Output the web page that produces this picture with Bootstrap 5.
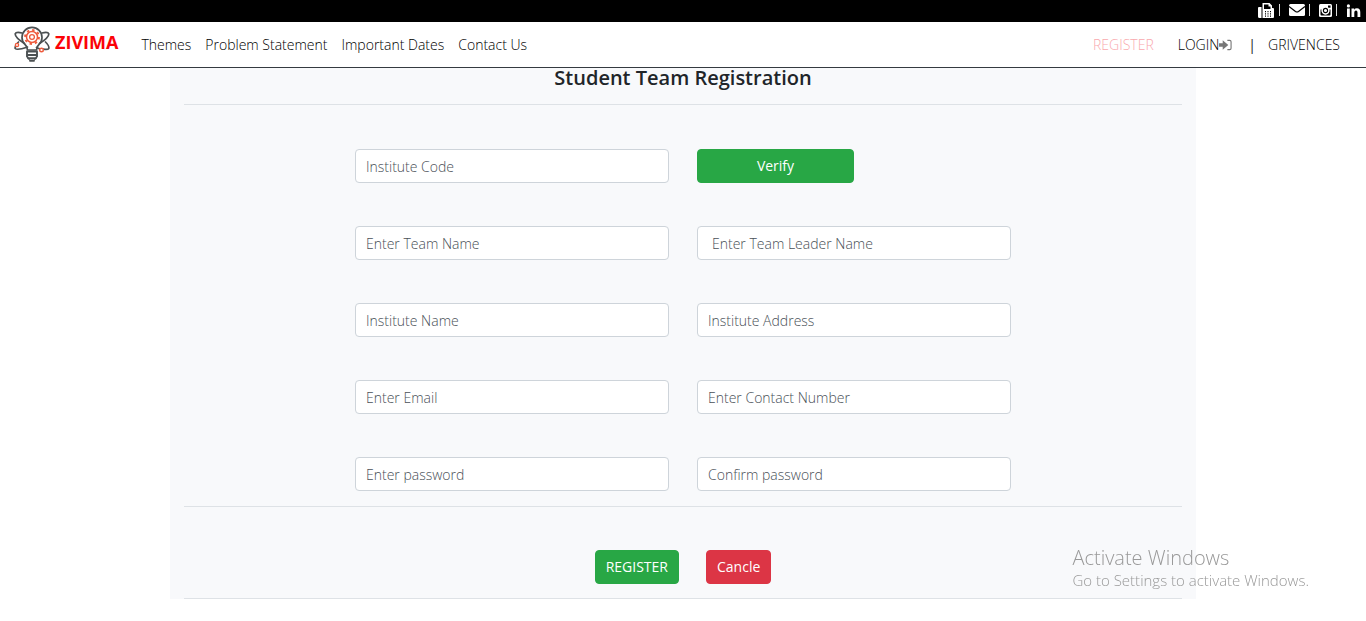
<!DOCTYPE html>
<html lang="en">
<head>
<meta charset="utf-8">
<meta name="viewport" content="width=device-width, initial-scale=1">
<title>Zivima - Student Team Registration</title>
<link href="https://cdn.jsdelivr.net/npm/bootstrap@5.3.0/dist/css/bootstrap.min.css" rel="stylesheet">
<style>
  body { font-family: "Open Sans", "Noto Sans", sans-serif; font-size: 14px; line-height: 20px; color: #212529; background: #fff; padding-top: 66px; }
  a { text-decoration: none; }
  .social-bar { background: #000; height: 22px; padding: 0 5px 2px 0; gap: 5px; }
  .social-bar a { color: #fff; display: flex; }
  .social-bar .divider { width: 1px; height: 12px; background: #ddd; }
  .social-bar .close-left { margin-left: -1px; }
  .main-nav { background: #fff; border-bottom: 1px solid #343a40; min-height: 46px; padding: 0 26px 0 14px; }
  .main-nav .nav-link { color: #000; padding: 0; font-size: 14px; font-weight: 300; line-height: 20px; }
  .main-nav .nav-link.current { color: #f9a9ae; }
  .brand { padding-bottom: 2px; }
  .site-name { color: #fb0207; font-weight: 700; font-size: 18px; line-height: 24px; margin-left: 5px; padding-bottom: 4px; }
  .site-links { gap: 14px; margin-left: 23px; }
  .login-icon { color: #777; }
  .panel { background: #f8f9fb; max-width: 1026px; padding: 0 14px; }
  .panel h1 { font-size: 20px; font-weight: 600; line-height: 24px; padding-bottom: 14px; }
  .panel hr { color: #dee2e6; opacity: 1; margin: 0; }
  .panel .row { --bs-gutter-x: 28px; }
  .fields { gap: 43px; padding: 44px 0 15px; }
  .panel .form-control, .panel .btn { font-size: 14px; line-height: 20px; height: 34px; padding: 6px 10px; border-radius: 4px; }
  .panel .form-control { border-color: #ced4da; }
  .panel .form-control::placeholder { color: #495057; font-weight: 300; }
  .panel .form-control.wide-start { padding-left: 14px; }
  .panel .btn { color: #fff; }
  .btn-go { background: #28a745; border-color: #28a745; }
  .btn-stop { background: #dc3545; border-color: #dc3545; }
  .actions { gap: 27px; padding: 43px 0 14px; }
  .watermark { right: 57px; bottom: 31px; color: #999; pointer-events: none; z-index: 1040; font-size: 15px; font-weight: 300; }
  .watermark .big-line { font-size: 20px; line-height: 24px; }
</style>
</head>
<body>
<header class="fixed-top">
  <div class="social-bar d-flex justify-content-end align-items-center">
    <a href="#" aria-label="Fax"><svg width="16" height="15" viewBox="0 0 16 15"><path fill="#fff" d="M1 4h2.500v11H1.500Q0 15 0 13.500V5Q0 4 1 4zM4.500 0h7l2.500 2.500v2.500h1q1 0 1 1v8q0 1-1 1H4.500z"/><path fill="#000" d="M6 1.500h4.500v2h2V6H6zM7 8h1v1.200H7zm2.500 0h1v1.200h-1zM12 8h1v1.200h-1zM7 10.300h1v1.200H7zm2.500 0h1v1.200h-1zm2.500 0h1v1.200h-1zM7 12.500h1v1.200H7zm2.500 0h1v1.200h-1zm2.500 0h1v1.200h-1z"/></svg></a>
    <span class="divider"></span>
    <a href="#" class="ms-1" aria-label="Email"><svg width="16" height="12" viewBox="0 0 16 12"><rect width="16" height="12" rx="1.500" fill="#fff"/><path d="M0 2.500l6.500 5q1.500 1 3 0l6.500-5" fill="none" stroke="#000" stroke-width="1.200"/></svg></a>
    <span class="divider close-left"></span>
    <a href="#" class="ms-1" aria-label="Instagram"><svg width="13" height="13" viewBox="0 0 13 13"><rect width="13" height="13" rx="1.500" fill="#fff"/><path d="M1.500 5.500v5q0 1 1 1h8q1 0 1-1v-5h-1.200A4 4 0 1 1 2.700 5.500zM9 1.500h2.500v2.300H9z" fill="#000"/><circle cx="6.500" cy="6.500" r="3.800" fill="#fff"/><circle cx="6.500" cy="6.500" r="2.100" fill="none" stroke="#000" stroke-width="1.100"/></svg></a>
    <span class="divider close-left"></span>
    <a href="#" class="ms-1" aria-label="LinkedIn"><svg width="15" height="13" viewBox="0 0 15 13"><path fill="#fff" d="M1 4.500h2.800V13H1zM5.500 4.500h2.700v1.200Q9 4.300 11 4.300q3.300 0 3.300 3.900V13h-2.800V8.600q0-2-1.500-2-1.700 0-1.700 2V13H5.500z"/><circle cx="2.400" cy="1.900" r="1.600" fill="#fff"/></svg></a>
  </div>
  <nav class="main-nav d-flex align-items-center">
    <a href="#" class="brand d-flex align-items-center">
      <svg width="36" height="37" viewBox="0 0 36 37" fill="none" stroke="#4b5052" stroke-width="1.700" stroke-linecap="round">
        <path d="M13.500 25q0-3.500-2.500-5.500a10 10 0 1 1 14 0q-2.500 2-2.500 5.500z"/>
        <path d="M8 8Q2 6.500 1.200 8.800 1 12.500 10.500 18.500M28 8q6-1.500 6.800 .8Q35 12.500 25.500 18.500M4.500 17q-4 4-3.300 6.500 2 2 12.300-1.500M31.500 17q4 4 3.300 6.500-1 1.500-5.500 .6M22.500 22.500l3.500 1.500"/>
        <path d="M13 26.500h10M13 30h10M14 33.200h8M16 35.700h4M13 26.500v5l2 2.500M23 26.500v5l-2 2.500" stroke-width="1.900"/>
        <g stroke="#ee5a3c"><circle cx="18" cy="12" r="5.500" stroke-width="1.500"/><circle cx="18" cy="12" r="7" stroke-width="1.800" stroke-dasharray="2.400 3.098" stroke-linecap="butt"/><circle cx="18" cy="12" r="2.400" stroke-width="1.300"/><circle cx="3" cy="20" r="1.600" fill="#fff" stroke-width="1.400"/><circle cx="27.500" cy="25" r="1.800" fill="#fff" stroke-width="1.400"/></g>
      </svg>
      <span class="site-name">ZIVIMA</span>
    </a>
    <div class="site-links d-flex flex-grow-1">
      <a class="nav-link" href="#">Themes</a>
      <a class="nav-link" href="#">Problem Statement</a>
      <a class="nav-link" href="#">Important Dates</a>
      <a class="nav-link" href="#">Contact Us</a>
    </div>
    <div class="d-flex align-items-center">
      <a class="nav-link current me-4" href="#">REGISTER</a>
      <a class="nav-link d-flex align-items-center" href="#">LOGIN<svg class="login-icon" width="13" height="12" viewBox="0 0 14 12"><path fill="currentColor" d="M0 4h4V1l6 5-6 5V8H0z"/><path d="M9 1h2.500q1.500 0 1.500 1.500v7q0 1.500-1.500 1.500H9" fill="none" stroke="currentColor" stroke-width="1.200"/></svg></a>
      <span class="ms-3 me-2 pe-1">|</span>
      <a class="nav-link" href="#">GRIVENCES</a>
    </div>
  </nav>
</header>

<main class="panel container">
  <h1 class="text-center m-0">Student Team Registration</h1>
  <form>
    <hr>
    <div class="fields d-flex flex-column">
      <div class="row">
        <div class="col-4 offset-2"><input class="form-control" type="text" placeholder="Institute Code" aria-label="Institute Code"></div>
        <div class="col-4"><button type="button" class="btn btn-go w-50">Verify</button></div>
      </div>
      <div class="row">
        <div class="col-4 offset-2"><input class="form-control" type="text" placeholder="Enter Team Name" aria-label="Team name"></div>
        <div class="col-4"><input class="form-control wide-start" type="text" placeholder="Enter Team Leader Name" aria-label="Team leader name"></div>
      </div>
      <div class="row">
        <div class="col-4 offset-2"><input class="form-control" type="text" placeholder="Institute Name" aria-label="Institute name"></div>
        <div class="col-4"><input class="form-control" type="text" placeholder="Institute Address" aria-label="Institute address"></div>
      </div>
      <div class="row">
        <div class="col-4 offset-2"><input class="form-control" type="email" placeholder="Enter Email" aria-label="Email"></div>
        <div class="col-4"><input class="form-control" type="tel" placeholder="Enter Contact Number" aria-label="Contact number"></div>
      </div>
      <div class="row">
        <div class="col-4 offset-2"><input class="form-control" type="password" placeholder="Enter password" aria-label="Password"></div>
        <div class="col-4"><input class="form-control" type="password" placeholder="Confirm password" aria-label="Confirm password"></div>
      </div>
    </div>
    <hr>
    <div class="actions d-flex justify-content-center">
      <button type="submit" class="btn btn-go">REGISTER</button>
      <button type="button" class="btn btn-stop">Cancle</button>
    </div>
    <hr>
  </form>
</main>

<aside class="watermark position-fixed">
  <div class="big-line">Activate Windows</div>
  <div>Go to Settings to activate Windows.</div>
</aside>
<script src="https://cdn.jsdelivr.net/npm/bootstrap@5.3.0/dist/js/bootstrap.bundle.min.js"></script>
</body>
</html>
